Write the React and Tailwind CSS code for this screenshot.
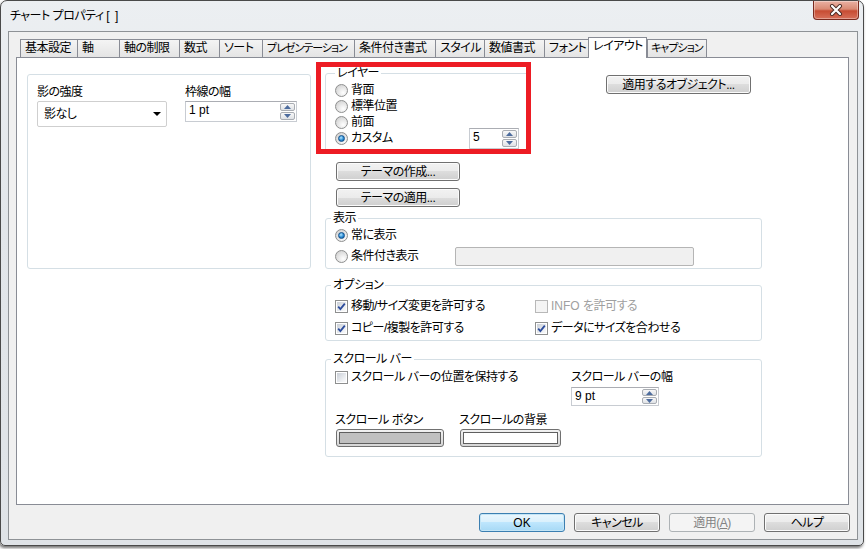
import React from 'react';

const tabs = [
  ['基本設定', 57],
  ['軸', 42],
  ['軸の制限', 60],
  ['数式', 40],
  ['ソート', 43],
  ['プレゼンテーション', 92, false, true],
  ['条件付き書式', 81],
  ['スタイル', 49],
  ['数値書式', 60],
  ['フォント', 44],
  ['レイアウト', 59, true],
  ['キャプション', 60, false, true],
];

const Radio = ({ checked }) => (
  <span className="w-[13px] h-[13px] shrink-0 rounded-full border border-[#8e8f8f] bg-[radial-gradient(circle_at_65%_70%,#ffffff,#dcdcdc_65%,#c2c2c2)] flex items-center justify-center">
    {checked && (
      <span className="w-[7px] h-[7px] rounded-full border border-[#12508c] bg-[radial-gradient(circle_at_40%_35%,#b4e6ff,#2a8bd3_55%,#0b4d8c)]" />
    )}
  </span>
);

const Check = ({ checked, disabled }) => (
  <span
    className={
      disabled
        ? 'w-[13px] h-[13px] shrink-0 border border-[#b8b8b8] bg-[#f4f4f4]'
        : 'w-[13px] h-[13px] shrink-0 border border-[#8e8f8f] bg-white p-[1px]'
    }
  >
    {!disabled && (
      <span className="block w-full h-full bg-[linear-gradient(135deg,#c9ced6,#eef0f3_70%,#fafafa)]">
        {checked && (
          <svg width="9" height="9" viewBox="0 0 9 9">
            <path d="M1.2 4.6 L3.4 7 L7.8 1.6" fill="none" stroke="#2c4c9c" strokeWidth="1.8" />
          </svg>
        )}
      </span>
    )}
  </span>
);

const Btn = ({ children, className = '', primary, disabled }) => {
  let look =
    'border-[#707070] bg-[linear-gradient(#f2f2f2_0%,#ebebeb_50%,#dddddd_50%,#cfcfcf_100%)] shadow-[inset_0_0_0_1px_#fbfbfb] text-black';
  if (primary)
    look =
      'border-[#3c7fb1] bg-[linear-gradient(#eaf6fd_0%,#d9f0fc_50%,#bee6fd_50%,#a7d9f5_100%)] shadow-[inset_0_0_0_1px_#c4e5f6] text-black';
  if (disabled) look = 'border-[#adb2b5] bg-[#f4f4f4] text-[#838383]';
  return (
    <div className={`h-[19px] rounded-[3px] border flex items-center justify-center leading-[14px] ${look} ${className}`}>
      {children}
    </div>
  );
};

const Arrow = ({ up }) => (
  <svg width="7" height="4" viewBox="0 0 7 4">
    <polygon points={up ? '0,4 3.5,0 7,4' : '0,0 7,0 3.5,4'} fill="#4d6c9e" />
  </svg>
);

const Spin = ({ value, className = '' }) => (
  <div className={`flex border border-[#c8ccd2] border-t-[#abadb3] bg-white ${className}`}>
    <span className="flex-1 pl-[3px] pt-[1px] leading-[14px] tracking-normal">{value}</span>
    <div className="w-[17px] flex flex-col gap-[1px] p-[1px]">
      <div className="flex-1 rounded-[2px] border border-[#a9adb3] bg-[linear-gradient(#f8f8f8,#dfe2e6)] flex items-center justify-center">
        <Arrow up />
      </div>
      <div className="flex-1 rounded-[2px] border border-[#a9adb3] bg-[linear-gradient(#f8f8f8,#dfe2e6)] flex items-center justify-center">
        <Arrow />
      </div>
    </div>
  </div>
);

const Group = ({ label, className = '', legendClass = 'ml-[5px]', children }) => (
  <fieldset className={`border border-[#d5dfe5] rounded-[3px] ${className}`}>
    <legend className={`px-[2px] leading-[14px] ${legendClass}`}>{label}</legend>
    {children}
  </fieldset>
);

const Swatch = ({ fill }) => (
  <div className="h-[18px] rounded-[3px] border border-[#707070] bg-[linear-gradient(#f2f2f2,#d6d6d6)] p-[2px]">
    <div className={`w-full h-full border border-[#5f5f5f] ${fill}`} />
  </div>
);

export default function App() {
  return (
    <div className="w-[867px] h-[549px] bg-white overflow-hidden text-[12px] tracking-[-0.5px] text-black font-['Liberation_Sans','Noto_Sans_CJK_JP',sans-serif] [font-feature-settings:'palt']">
      <div className="w-[864px] h-[546px] flex flex-col rounded-t-[7px] rounded-b-[5px] border border-[#4a4a4a] shadow-[-1px_2px_3px_rgba(0,0,0,0.55)] bg-[linear-gradient(180deg,#eceff2_0%,#e2e6ea_40%,#dfe3e7_100%)]">
        {/* title bar */}
        <div className="h-[30px] shrink-0 flex items-center pl-[9px]">
          <span className="leading-[14px]">
            チャート プロパティ <span className="tracking-[1px]">[ ]</span>
          </span>
          <div className="ml-auto mr-[4px] self-start w-[46px] h-[19px] rounded-b-[4px] border border-t-0 border-[#7a2a1e] bg-[linear-gradient(#eab1a3_0%,#d98a74_45%,#c74c33_55%,#d7705a_100%)] shadow-[inset_0_0_0_1px_rgba(255,255,255,0.35)] flex items-center justify-center">
            <svg width="14" height="12" viewBox="0 0 14 12">
              <path d="M3 2 L11 10 M11 2 L3 10" stroke="#4a2a24" strokeWidth="4" strokeLinecap="round" />
              <path d="M3 2 L11 10 M11 2 L3 10" stroke="#ffffff" strokeWidth="2.2" strokeLinecap="round" />
            </svg>
          </div>
        </div>

        {/* client area */}
        <div className="ml-[7px] w-[850px] h-[509px] border border-[#8e9296] bg-[#f0f0f0] flex flex-col">
          {/* tabs */}
          <div className="mt-[5px] h-[20px] pl-[11px] flex items-end">
            {tabs.map(([name, w, sel, tight], i) => (
              <div
                key={name}
                style={{ width: w }}
                className={
                  sel
                    ? 'relative z-10 -mb-px h-[21px] border border-b-0 border-[#898c95] bg-white pl-[4px] pt-[1px] leading-[14px] whitespace-nowrap overflow-hidden'
                    : i === tabs.length - 1
                    ? 'h-[18px] border-l border-t border-r border-[#898c95] bg-[linear-gradient(#f4f4f4,#e4e4e4)] pl-[3px] leading-[16px] whitespace-nowrap overflow-hidden'
                    : 'h-[18px] border-l border-t border-[#898c95] bg-[linear-gradient(#f4f4f4,#e4e4e4)] pl-[4px] leading-[16px] whitespace-nowrap overflow-hidden'
                }
              >
                <span className={tight ? 'text-[11px] tracking-[-1px]' : ''}>{name}</span>
              </div>
            ))}
          </div>

          {/* tab panel */}
          <div className="ml-[7px] w-[833px] h-[448px] border border-[#898c95] bg-white flex items-start">
            {/* left group */}
            <div className="ml-[10px] mt-[16px] w-[284px] h-[195px] border border-[#d5dfe5] rounded-[3px] flex pt-[10px] pl-[9px]">
              <div className="w-[130px]">
                <div className="h-[14px] leading-[14px]">影の強度</div>
                <div className="mt-[2px] h-[26px] border border-[#cfcfcf] rounded-[2px] flex items-center pl-[6px] pr-[5px]">
                  <span className="leading-[14px]">影なし</span>
                  <svg className="ml-auto" width="8" height="4" viewBox="0 0 8 4">
                    <polygon points="0,0 8,0 4,4" fill="#000" />
                  </svg>
                </div>
              </div>
              <div className="ml-[18px]">
                <div className="h-[14px] leading-[14px]">枠線の幅</div>
                <Spin value="1 pt" className="mt-[2px] w-[112px] h-[21px]" />
              </div>
            </div>

            {/* right column */}
            <div className="ml-[14px] mt-[8px] flex flex-col">
              <div className="relative flex items-start">
                <Group label="レイヤー" legendClass="ml-[9px]" className="w-[204px]">
                  <div className="pl-[9px] pt-[2px] pb-[5px] flex flex-col">
                    <div className="h-[16px] flex items-center gap-[3px]">
                      <Radio />
                      <span className="leading-[14px]">背面</span>
                    </div>
                    <div className="h-[16px] flex items-center gap-[3px]">
                      <Radio />
                      <span className="leading-[14px]">標準位置</span>
                    </div>
                    <div className="h-[16px] flex items-center gap-[3px]">
                      <Radio />
                      <span className="leading-[14px]">前面</span>
                    </div>
                    <div className="h-[16px] flex items-center gap-[3px]">
                      <Radio checked />
                      <span className="w-[115px] leading-[14px]">カスタム</span>
                      <Spin value="5" className="w-[50px] h-[21px] shrink-0" />
                    </div>
                  </div>
                </Group>
                <div className="pointer-events-none absolute left-[-9px] top-[-4px] w-[215px] h-[92px] border-[5px] border-[#ed1c24]" />
                <Btn className="ml-[77px] mt-[9px] w-[145px]">適用するオブジェクト...</Btn>
              </div>

              <Btn className="ml-[11px] mt-[10px] w-[124px]">テーマの作成...</Btn>
              <Btn className="ml-[11px] mt-[7px] w-[124px]">テーマの適用...</Btn>

              <Group label="表示" className="mt-[4px] w-[437px]">
                <div className="pl-[9px] pt-[2px] pb-[4px] flex flex-col">
                  <div className="h-[16px] flex items-center gap-[3px]">
                    <Radio checked />
                    <span className="leading-[14px]">常に表示</span>
                  </div>
                  <div className="mt-[5px] h-[16px] flex items-center gap-[3px]">
                    <Radio />
                    <span className="w-[101px] leading-[14px]">条件付き表示</span>
                    <div className="w-[239px] h-[19px] shrink-0 rounded-[2px] border border-[#b5b5b5] bg-[#f0f0f0]" />
                  </div>
                </div>
              </Group>

              <Group label="オプション" className="mt-[9px] w-[437px]">
                <div className="pl-[9px] pb-[4px] flex flex-col">
                  <div className="mt-[6px] h-[16px] flex items-center">
                    <div className="w-[200px] flex items-center gap-[3px]">
                      <Check checked />
                      <span className="leading-[14px]">移動/サイズ変更を許可する</span>
                    </div>
                    <div className="flex items-center gap-[3px]">
                      <Check disabled />
                      <span className="leading-[14px] text-[#a0a0a0]">
                        <span className="tracking-normal">INFO </span>を許可する
                      </span>
                    </div>
                  </div>
                  <div className="mt-[6px] h-[16px] flex items-center">
                    <div className="w-[200px] flex items-center gap-[3px]">
                      <Check checked />
                      <span className="leading-[14px]">コピー/複製を許可する</span>
                    </div>
                    <div className="flex items-center gap-[3px]">
                      <Check checked />
                      <span className="leading-[14px]">データにサイズを合わせる</span>
                    </div>
                  </div>
                </div>
              </Group>

              <Group label="スクロール バー" className="mt-[11px] w-[437px]">
                <div className="pl-[9px] pt-[3px] pb-[9px] flex flex-col">
                  <div className="flex items-start">
                    <div className="w-[236px] h-[16px] flex items-center gap-[3px]">
                      <Check />
                      <span className="leading-[14px]">スクロール バーの位置を保持する</span>
                    </div>
                    <div>
                      <div className="h-[16px] leading-[16px]">スクロール バーの幅</div>
                      <Spin value="9 pt" className="mt-[2px] w-[88px] h-[19px]" />
                    </div>
                  </div>
                  <div className="mt-[6px] flex">
                    <div className="w-[124px]">
                      <div className="h-[16px] leading-[16px]">スクロール ボタン</div>
                      <div className="mt-[1px] ml-px w-[108px]">
                        <Swatch fill="bg-[#c0c0c0]" />
                      </div>
                    </div>
                    <div>
                      <div className="h-[16px] leading-[16px]">スクロールの背景</div>
                      <div className="mt-[1px] ml-px w-[101px]">
                        <Swatch fill="bg-white" />
                      </div>
                    </div>
                  </div>
                </div>
              </Group>
            </div>
          </div>

          {/* dialog buttons */}
          <div className="mt-[8px] pr-[7px] flex justify-end gap-[9px]">
            <Btn primary className="w-[86px] tracking-normal">OK</Btn>
            <Btn className="w-[86px]">キャンセル</Btn>
            <Btn disabled className="w-[86px]">
              <span>
                適用(<span className="underline">A</span>)
              </span>
            </Btn>
            <Btn className="w-[86px]">ヘルプ</Btn>
          </div>
        </div>
      </div>
    </div>
  );
}
